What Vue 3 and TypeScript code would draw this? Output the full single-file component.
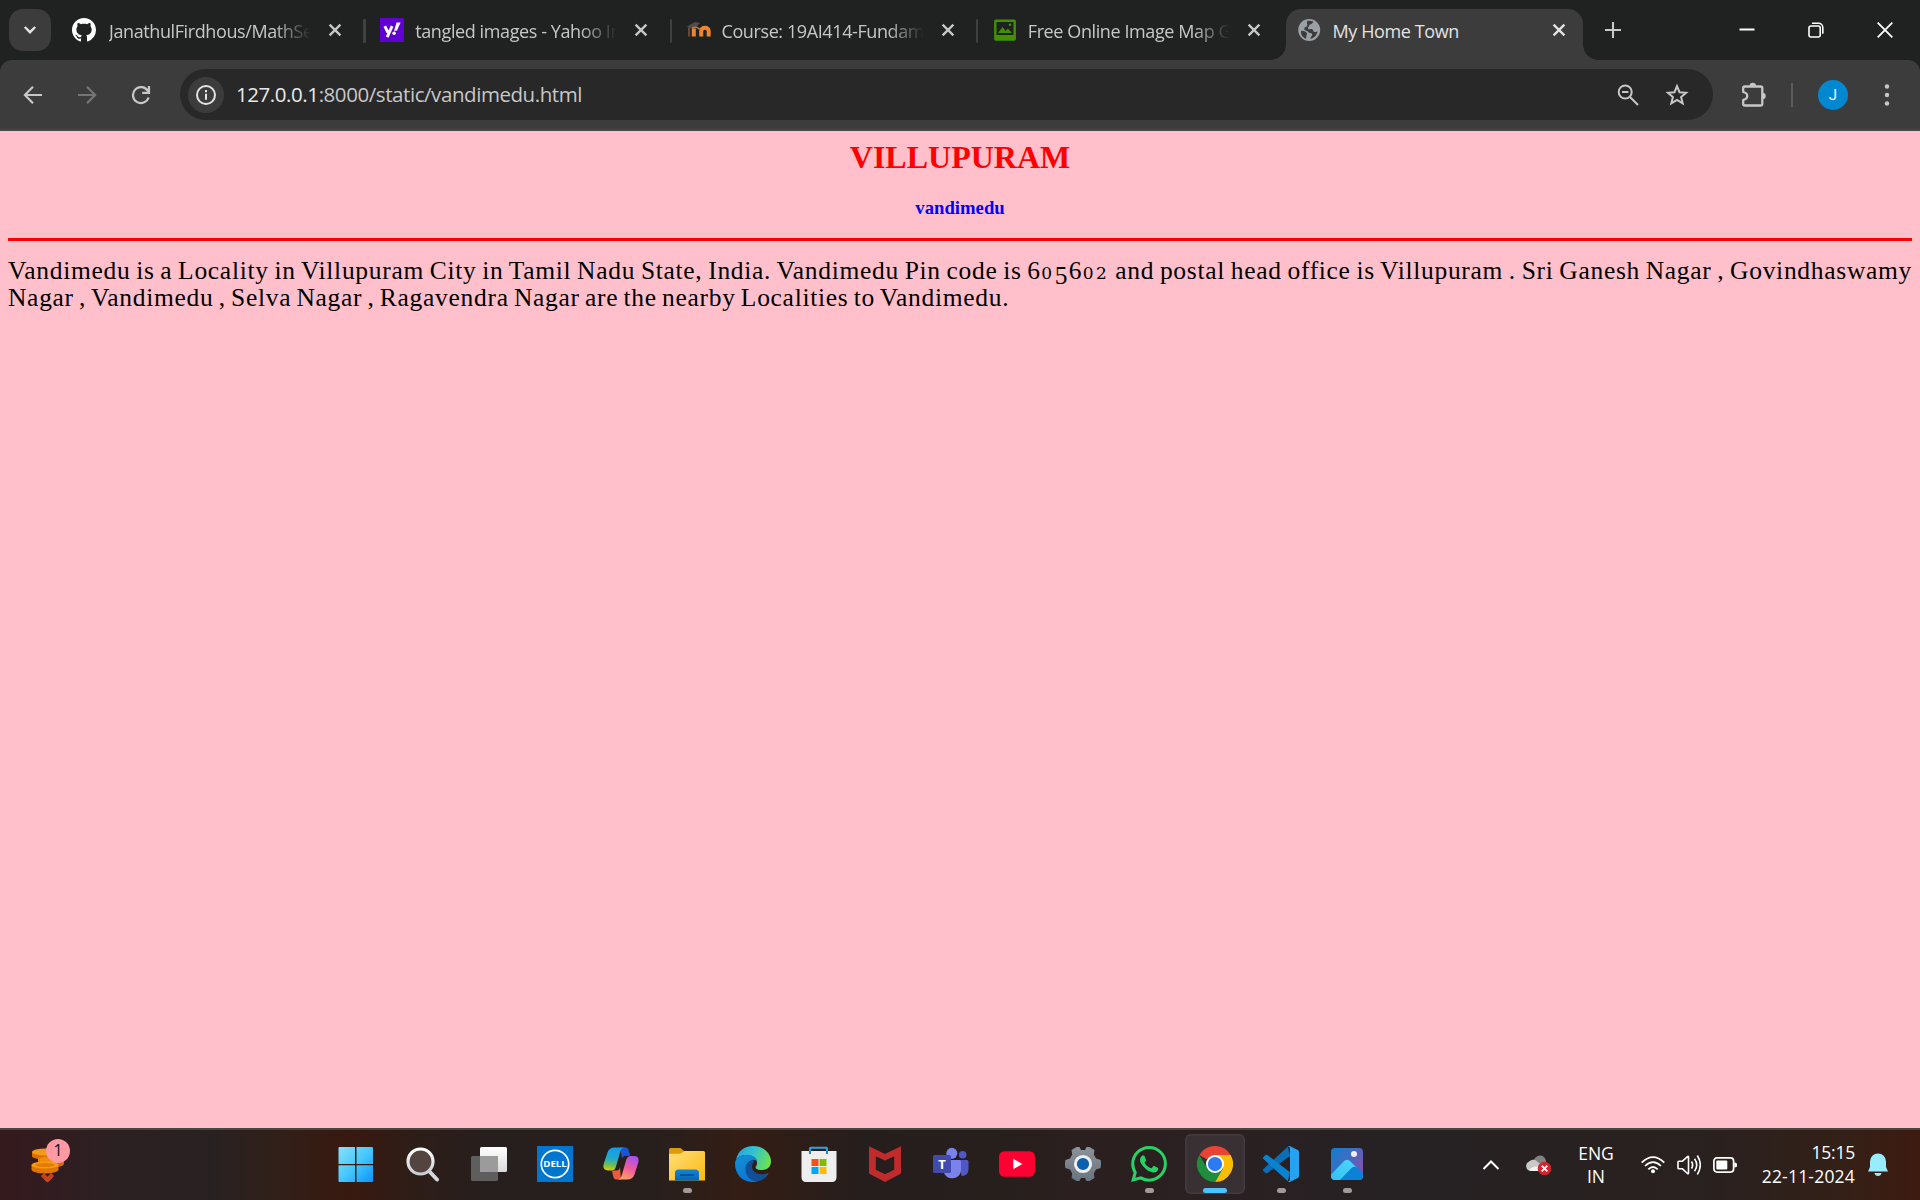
<script setup lang="ts">
interface Tab {
  id: string
  title: string
  active: boolean
}

const tabs: Tab[] = [
  { id: 'github', title: 'JanathulFirdhous/MathServer', active: false },
  { id: 'yahoo', title: 'tangled images - Yahoo Image', active: false },
  { id: 'moodle', title: 'Course: 19AI414-Fundamentals', active: false },
  { id: 'map', title: 'Free Online Image Map Generator', active: false },
  { id: 'globe', title: 'My Home Town', active: true },
]
</script>

<template>
  <div class="screen">
    <header class="tabstrip">
      <button class="tab-search">
        <svg width="14" height="10" viewBox="0 0 14 10"><path d="M1.8 2 7 7.2 12.2 2" fill="none" stroke="#e3e3e3" stroke-width="2.4" /></svg>
      </button>
      <div class="tabs">
        <div v-for="tab in tabs" :key="tab.id" class="tab" :class="[tab.id, { active: tab.active }]">
          <span class="fav">
            <svg v-if="tab.id === 'github'" width="24" height="24" viewBox="0 0 16 16"><path fill="#fff" d="M8 0C3.58 0 0 3.58 0 8c0 3.54 2.29 6.53 5.47 7.59.4.07.55-.17.55-.38 0-.19-.01-.82-.01-1.49-2.01.37-2.53-.49-2.69-.94-.09-.23-.48-.94-.82-1.13-.28-.15-.68-.52-.01-.53.63-.01 1.08.58 1.23.82.72 1.21 1.87.87 2.33.66.07-.52.28-.87.51-1.07-1.78-.2-3.64-.89-3.64-3.95 0-.87.31-1.59.82-2.15-.08-.2-.36-1.02.08-2.12 0 0 .67-.21 2.2.82.64-.18 1.32-.27 2-.27s1.36.09 2 .27c1.53-1.04 2.2-.82 2.2-.82.44 1.1.16 1.92.08 2.12.51.56.82 1.27.82 2.15 0 3.07-1.87 3.75-3.65 3.95.29.25.54.73.54 1.48 0 1.07-.01 1.93-.01 2.2 0 .21.15.46.55.38A8.01 8.01 0 0 0 16 8c0-4.42-3.58-8-8-8Z" /></svg>
            <svg v-else-if="tab.id === 'yahoo'" width="24" height="24" viewBox="0 0 24 24">
              <rect width="24" height="24" fill="#6001d2" />
              <path d="M4.8 8.2 8 14.6M12.1 8.2 7.2 19.2" fill="none" stroke="#fff" stroke-width="2.9" />
              <path d="M16.6 4.6h4l-3.7 8.2h-2.9z" fill="#fff" /><circle cx="14.1" cy="15.3" r="1.8" fill="#fff" />
            </svg>
            <svg v-else-if="tab.id === 'moodle'" width="24" height="24" viewBox="0 0 24 24">
              <path d="M0 8.5 8 4l5 1-4 4.5-7 .5z" fill="#534b49" />
              <path d="M2 9.5v9" stroke="#69483a" stroke-width="2" />
              <path d="M6.8 18.6v-8M14.2 18.6v-5.3c0-4.8 7.5-4.8 7.5 0v5.3" fill="none" stroke="#f0842c" stroke-width="4" />
              <path d="M4.8 10.5q5-3 8 1" fill="none" stroke="#c4773a" stroke-width="1.6" />
            </svg>
            <svg v-else-if="tab.id === 'map'" width="24" height="24" viewBox="0 0 24 24">
              <rect x="2.3" y="2.700" width="19.4" height="18.800" rx=".6" fill="#202221" stroke="#429102" stroke-width="2.4" />
              <path d="M2 17h20v5H2zM5 15l4.5-6 3.2 4 2.1-2.600 4 4.600z" fill="#429102" /><circle cx="17" cy="6.800" r="1.3" fill="#429102" />
            </svg>
            <svg v-else width="24" height="24" viewBox="0 0 24 24">
              <circle cx="11.2" cy="12" r="11" fill="#9aa0a6" />
              <path d="M3.2 12.8c3.3.2 5.4 1 5.8 2.8.2 1.7-1 2-.7 3.6l-.2 1.6C4.3 19.4 2.4 16 3.2 12.8zM9.3 3.1c3.7-.8 5.6.4 6.4 1.2-1.8.3-1.6 1.8-3 2-2.3.3-1 2.5-2.5 3-.9.5-.1 2 1.2 1.9 2.4-.4 3.5.1 4 1.7.6 1.4 2 1.4 3 .9l1.1-.4c-.8 4-3.5 6.8-7.3 7.3.3-2.2 2.1-2.3 2-4.2-.1-1.2-1.5-1.4-2.4-1.5-1.7-.2-1.6-1.9-3.2-2.2-2-.3-2.9-1.3-2-3 .9-1.5 2.6-.8 2.7-2.6.1-1.7-.7-2.6 0-4.1z" fill="#3c3c3c" />
            </svg>
          </span>
          <span class="tab-title">{{ tab.title }}</span>
          <svg class="tab-close" width="14" height="14" viewBox="0 0 14 14"><path d="M1.6 1.6 12.4 12.4M12.4 1.6 1.6 12.4" stroke="currentColor" stroke-width="2.3" fill="none" /></svg>
        </div>
      </div>
      <svg class="new-tab" width="16" height="16" viewBox="0 0 16 16"><path d="M8 0v16M0 8h16" stroke="#c9c9c9" stroke-width="2.1" /></svg>
      <div class="win-controls">
        <svg width="16" height="16" viewBox="0 0 16 16"><path d="M.5 7.500h15" stroke="#fff" stroke-width="2" /></svg>
        <svg width="16" height="16" viewBox="0 0 16 16" fill="none" stroke="#fff" stroke-width="1.6"><rect x="1" y="4" width="11.2" height="11" rx="2" /><path d="M4 1.2h6.5a4.3 4.3 0 0 1 4.3 4.3v6.2" /></svg>
        <svg width="16" height="16" viewBox="0 0 16 16"><path d="M.7.7 15.3 15.3M15.3.7.7 15.3" stroke="#fff" stroke-width="1.8" /></svg>
      </div>
    </header>

    <nav class="toolbar">
      <div class="nav-icons">
        <svg width="20" height="20" viewBox="0 0 20 20" fill="none" stroke="#c7c7c7" stroke-width="2.2"><path d="M19 10H2.5M10 1.8 1.9 10l8.1 8.2" /></svg>
        <svg width="20" height="20" viewBox="0 0 20 20" fill="none" stroke="#757575" stroke-width="2.2"><path d="M1 10h16.5M10 1.8l8.1 8.2-8.1 8.2" /></svg>
        <svg width="20" height="20" viewBox="0 0 20 20" fill="none" stroke="#c7c7c7" stroke-width="2.2"><path d="M17.6 12.5A8 8 0 1 1 17 6.2M18 1v6.8h-6.8" /></svg>
      </div>
      <div class="omnibox">
        <span class="site-info">
          <svg width="22" height="22" viewBox="0 0 22 22"><circle cx="11" cy="11" r="9" fill="none" stroke="#e3e3e3" stroke-width="2" /><path d="M11 9.8v6M11 6v2.2" stroke="#e3e3e3" stroke-width="2" /></svg>
        </span>
        <span class="url"><b>127.0.0.1</b>:8000/static/vandimedu.html</span>
        <svg class="zoom-icon" width="24" height="24" viewBox="0 0 24 24" fill="none" stroke="#c7c7c7" stroke-width="2"><circle cx="9.2" cy="9" r="6.5" /><path d="M14 14l8 8M6 9h6.4" /></svg>
        <svg width="24" height="24" viewBox="0 0 24 24" fill="none" stroke="#c7c7c7" stroke-width="2"><path d="M12 3.2l2.5 6 6.6.5-5 4.3 1.6 6.4-5.7-3.4-5.7 3.4L7.9 14l-5-4.3 6.6-.5z" /></svg>
      </div>
      <svg class="ext" width="26" height="26" viewBox="0 0 26 26"><path d="M3.2 6.2q0-1.7 1.700-1.700h15.700q1.700 0 1.700 1.700v15.600q0 1.700-1.700 1.700H4.900q-1.700 0-1.700-1.700v-3.900c5.400-1.200 5.400-6.700 0-7.900z" fill="none" stroke="#c7c7c7" stroke-width="2.3" stroke-linejoin="round" /><path d="M9.600 4a3.200 3.200 0 0 1 6.400 0zM22.500 10.800a3.200 3.200 0 0 1 0 6.400z" fill="#c7c7c7" /></svg>
      <i class="bar-divider"></i>
      <span class="avatar">J</span>
      <svg class="menu" width="6" height="26" viewBox="0 0 6 26" fill="#c7c7c7"><circle cx="3" cy="4.5" r="2.2" /><circle cx="3" cy="13" r="2.2" /><circle cx="3" cy="21.5" r="2.2" /></svg>
    </nav>

    <main class="page">
      <h1>VILLUPURAM</h1>
      <h3>vandimedu</h3>
      <hr />
      <p>Vandimedu is a Locality in Villupuram City in Tamil Nadu State, India. Vandimedu Pin code is <span class="num">6<i>0</i><u>5</u>6<i>02</i></span> and postal head office is Villupuram . Sri Ganesh Nagar , Govindhaswamy Nagar , Vandimedu , Selva Nagar , Ragavendra Nagar are the nearby Localities to Vandimedu.</p>
    </main>

    <footer class="taskbar">
      <div class="widget">
        <svg width="34" height="38" viewBox="0 0 34 38">
          <path d="M7 12v5c0 5 24 5 26 0v-5z" fill="#d46b00" />
          <path d="M1 5v4.5c2 4 24 4 27 0V5z" fill="#d96f00" /><ellipse cx="14.5" cy="5" rx="13.5" ry="3.6" fill="#f59a16" />
          <ellipse cx="20" cy="13" rx="13" ry="3.4" fill="#ef8c0c" />
          <path d="M.5 18v5c2 4.5 25 4.5 27 0v-5z" fill="#de7500" /><ellipse cx="14" cy="18" rx="13.5" ry="3.6" fill="#f79a12" /><ellipse cx="14" cy="18" rx="9.5" ry="2" fill="#e27c04" />
          <path d="M11.500 27.500l5 5.500 5-5.500" fill="none" stroke="#c8431c" stroke-width="4.2" stroke-linejoin="round" />
        </svg>
        <span class="badge">1</span>
      </div>

      <div class="apps">
        <span class="app start"><svg width="36" height="36" viewBox="0 0 36 36"><defs><linearGradient id="win" gradientUnits="userSpaceOnUse" x1="0" y1="0" x2="36" y2="36"><stop offset="0" stop-color="#8be1fb" /><stop offset=".5" stop-color="#48c8fb" /><stop offset="1" stop-color="#0893fb" /></linearGradient></defs><path fill="url(#win)" d="M1.5 1H17v17H.5V2q0-1 1-1zM18.500 1H34q1 0 1 1v16H18.500zM.5 19.300H17V36H1.500q-1 0-1-1zM18.500 19.300H35V35q0 1-1 1H18.500z" /></svg></span>
        <span class="app"><svg width="36" height="36" viewBox="0 0 36 36"><defs><linearGradient id="mag" x1="0" y1="0" x2="0" y2="1"><stop offset="0" stop-color="#fff" /><stop offset="1" stop-color="#c9ccd2" /></linearGradient></defs><path d="M24 25l8 8.500" stroke="#d4d7dc" stroke-width="4" stroke-linecap="round" /><circle cx="15.500" cy="15.500" r="12.500" fill="#54443f" stroke="url(#mag)" stroke-width="3.200" /></svg></span>
        <span class="app"><svg width="36" height="36" viewBox="0 0 36 36"><defs><linearGradient id="tv" x1="0" y1="0" x2="0" y2="1"><stop offset="0" stop-color="#fff" /><stop offset="1" stop-color="#d9d9d9" /></linearGradient></defs><rect x="0" y="10" width="27" height="25" rx="1.5" fill="#5e5e5e" /><rect x="9" y="1" width="27" height="25" rx="1.5" fill="url(#tv)" /><path d="M9 10h18v16H10.500Q9 26 9 24.500z" fill="#9b9b9b" /></svg></span>
        <span class="app"><svg width="36" height="36" viewBox="0 0 36 36"><rect width="36" height="36" fill="#0076ce" /><circle cx="18" cy="18" r="13.7" fill="none" stroke="#fff" stroke-width="1.7" /><text x="18" y="21.4" text-anchor="middle" textLength="23.5" lengthAdjust="spacingAndGlyphs" class="dell">DELL</text></svg></span>
        <span class="app"><svg width="36" height="36" viewBox="0 0 36 36"><defs>
          <linearGradient id="cp1" x1=".2" y1="0" x2=".1" y2="1"><stop offset="0" stop-color="#159bea" /><stop offset=".45" stop-color="#20a9d0" /><stop offset=".75" stop-color="#6cbf50" /><stop offset="1" stop-color="#ebc907" /></linearGradient>
          <linearGradient id="cp2" x1=".7" y1="0" x2=".3" y2="1"><stop offset="0" stop-color="#a750ef" /><stop offset=".5" stop-color="#ee5a9c" /><stop offset="1" stop-color="#ffa560" /></linearGradient></defs>
          <path d="M17 1.500h5c3 0 3.500 2 4.300 5l1 3.200h-4.500c-2 0-3 1-3.600 3z" fill="#1a54d8" />
          <path d="M18 33.500h-4c-3 0-3.500-2-4.300-5L9 24.500h4.500c2 0 3-1 3.600-3z" fill="#ed5a3c" />
          <path d="M12 1.500h10c-3 0-4.200 2-5 5L13 20.500c-1 3-2 4-5 4H5c-4 0-5.300-2.500-4.300-6.500L4.500 6.500C5.700 3 8 1.500 12 1.500z" fill="url(#cp1)" />
          <path d="M24 33.500H14c3 0 4.200-2 5-5l4-14c1-3 2-4.500 5-4.500h3c4 0 5.300 2.500 4.300 6.500l-3.800 12c-1.200 3.500-3.500 5-7.500 5z" fill="url(#cp2)" /></svg></span>
        <span class="app running"><svg width="36" height="36" viewBox="0 0 36 36"><defs><linearGradient id="fo" x1="0" y1="0" x2="1" y2="1"><stop offset="0" stop-color="#ffdf78" /><stop offset="1" stop-color="#fbb912" /></linearGradient><linearGradient id="fb" x1="0" y1="0" x2="0" y2="1"><stop offset="0" stop-color="#1185d5" /><stop offset="1" stop-color="#0765b6" /></linearGradient></defs><path d="M0 3.500Q0 2 1.500 2h9.300q1.200 0 2 1l2.200 2-3 6H0z" fill="#dc9a06" /><path d="M0 7.700h10.500q1.300 0 2.300-.8L15 5h19.500Q36 5 36 6.500v28H0z" fill="url(#fo)" /><path d="M6 34.500V27q0-3.500 3.500-3.500h17Q30 23.500 30 27v7.500z" fill="url(#fb)" /><path d="M11 29h14" stroke="#064b8b" stroke-width="1.6" /></svg></span>
        <span class="app"><svg width="36" height="36" viewBox="0 0 36 36"><defs><linearGradient id="ed" x1="0" y1=".3" x2="1" y2=".6"><stop offset="0" stop-color="#27a4e2" /><stop offset=".45" stop-color="#34c2cf" /><stop offset="1" stop-color="#70e34a" /></linearGradient><linearGradient id="eb" x1="0" y1="0" x2=".4" y2="1"><stop offset="0" stop-color="#1391d3" /><stop offset="1" stop-color="#0a78d4" /></linearGradient></defs>
          <path d="M1 14C2.500 5 9.500 0 18 0c10 0 18 7 18 15.500 0 5-4 8.500-9 8.500-4 0-6.800-1.300-6.300-3 .8-1.500 1.600-2.400 1.300-5C21.500 11 16.500 9 12 9 6.500 9 2.500 11 1 14z" fill="url(#ed)" />
          <path d="M0 18C0 12.500 5 8.700 12 8.700c5.500 0 10 3 10 7.300-1-2-3-2.500-4.500-2-4 1-7 5-6.500 10 .5 6 5.500 11 11.500 11.400C9.500 38.500 0 29.500 0 18z" fill="url(#eb)" />
          <path d="M17.500 14c-4 1-7.500 5-7 10 .5 7 6 11.500 12 11.400 4.500-.9 8.500-3.500 11-7.500.3-.8-.2-1.200-1-.9-6.500 3-15 .5-15.500-6-.1-2.500 1.300-4 1.700-4.700.4-.8.2-1.800-1.200-2.300z" fill="#104f9a" /></svg></span>
        <span class="app"><svg width="36" height="36" viewBox="0 0 36 36"><path d="M9 8V2.500Q9 1.800 9.700 1.800h15.600q.7 0 .7.700V8" fill="none" stroke="#28a8ea" stroke-width="2" /><path d="M.5 5H35.500V31Q35.500 36 31 36H5Q.5 36 .5 31z" fill="#eeeeef" /><path d="M9 5v3M26 5v3" stroke="#1c87c5" stroke-width="2" /><path d="M10.500 13h7v7h-7z" fill="#f1511b" /><path d="M18.500 13h7v7h-7z" fill="#80bc06" /><path d="M10.500 21h7v7h-7z" fill="#05a6f0" /><path d="M18.500 21h7v7h-7z" fill="#ffba08" /></svg></span>
        <span class="app"><svg width="36" height="36" viewBox="0 0 36 36"><path d="M2 .3 18 8 34 .3V27.500L18 36 2 27.500zM8.800 10.300v13.400L18 28.300l9.200-4.600V10.300L18 14.500z" fill="#c12b2b" fill-rule="evenodd" /></svg></span>
        <span class="app"><svg width="36" height="36" viewBox="0 0 36 36"><circle cx="29.700" cy="8.700" r="3.800" fill="#5058c8" /><path d="M25 14h9q1.500 0 1.500 1.500V23q0 7-7 7z" fill="#5058c8" /><circle cx="18.800" cy="7.300" r="5.500" fill="#7b83eb" /><path d="M11 14h15.500q1.500 0 1.500 1.500V25a9 9 0 0 1-17 2z" fill="#7b83eb" /><rect y="9" width="18" height="18" rx="1.5" fill="#434aae" /><text x="9" y="22.5" text-anchor="middle" class="teams">T</text></svg></span>
        <span class="app"><svg width="36" height="36" viewBox="0 0 36 36"><rect y="5.2" width="36" height="25.600" rx="5.500" fill="#ff0033" /><path d="M14.300 12.800v10.400l9-5.200z" fill="#fff" /></svg></span>
        <span class="app"><svg width="36" height="36" viewBox="0 0 36 36"><defs><linearGradient id="ge" x1="0" y1="0" x2="0" y2="1"><stop offset="0" stop-color="#8c9298" /><stop offset="1" stop-color="#697580" /></linearGradient></defs><path d="M11.500 1h3l1.500 3h4l1.500-3h3l5 3-.7 4.500 2.300 4 4.500 1.500q.8 4 0 8L31 23.500l-2.200 4 .7 4.500-5 3h-3L20 32h-4l-1.500 3h-3l-5-3 .7-4.500-2.200-4L.4 22q-.8-4 0-8L5 12.500l2.200-4L6.500 4z" fill="url(#ge)" /><circle cx="18" cy="18" r="7.600" fill="#0d60af" stroke="#eee" stroke-width="3" /></svg></span>
        <span class="app running"><svg width="36" height="36" viewBox="0 0 24 24"><path fill="#25d366" d="M17.472 14.382c-.297-.149-1.758-.867-2.030-.967-.273-.099-.471-.148-.67.15-.197.297-.767.966-.94 1.164-.173.199-.347.223-.644.075-.297-.15-1.255-.463-2.390-1.475-.883-.788-1.480-1.761-1.653-2.059-.173-.297-.018-.458.13-.606.134-.133.298-.347.446-.52.149-.174.198-.298.298-.497.099-.198.05-.371-.025-.52-.075-.149-.669-1.612-.916-2.207-.242-.579-.487-.5-.669-.51-.173-.008-.371-.01-.57-.01-.198 0-.52.074-.792.372-.272.297-1.040 1.016-1.040 2.479 0 1.462 1.065 2.875 1.213 3.074.149.198 2.096 3.200 5.077 4.487.709.306 1.262.489 1.694.625.712.227 1.360.195 1.871.118.571-.085 1.758-.719 2.006-1.413.248-.694.248-1.289.173-1.413-.074-.124-.272-.198-.57-.347m-5.421 7.403h-.004a9.870 9.870 0 0 1-5.031-1.378l-.361-.214-3.741.982.998-3.648-.235-.374a9.860 9.860 0 0 1-1.510-5.260c.001-5.450 4.436-9.884 9.888-9.884 2.640 0 5.122 1.030 6.988 2.898a9.825 9.825 0 0 1 2.893 6.994c-.003 5.450-4.437 9.884-9.885 9.884m8.413-18.297A11.815 11.815 0 0 0 12.050 0C5.495 0 .16 5.335.157 11.892c0 2.096.547 4.142 1.588 5.945L.057 24l6.305-1.654a11.882 11.882 0 0 0 5.683 1.448h.005c6.554 0 11.890-5.335 11.893-11.893a11.821 11.821 0 0 0-3.480-8.413z" /></svg></span>
        <span class="app current"><svg width="36" height="36" viewBox="0 0 48 48"><path d="M24 24 3.200 12A24 24 0 0 1 44.800 12z" fill="#ea4335" /><path d="M24 12H44.800A24 24 0 0 1 24 48L34.400 30z" fill="#fbbc04" /><path d="M3.200 12A24 24 0 0 0 24 48L34.400 30H13.600z" fill="#1e8e3e" /><circle cx="24" cy="24" r="12" fill="#fff" /><circle cx="24" cy="24" r="9.500" fill="#2c7bf0" /></svg></span>
        <span class="app running"><svg width="36" height="36" viewBox="0 0 24 24"><path d="M1.650 17.940.327 16.740a1 1 0 0 1 0-1.480L16.500.5l1.504 6.052L2.926 17.997a1 1 0 0 1-1.276-.057z" fill="#0b6fb8" /><path d="M1.650 6.060.327 7.260a1 1 0 0 0 0 1.480L16.500 23.500l1.504-6.052L2.926 6.002a1 1 0 0 0-1.276.058z" fill="#0a82d0" /><path d="M16.500.5Q17.300-.2 18.210.21l4.940 2.377A1.500 1.500 0 0 1 24 3.940v16.120a1.500 1.500 0 0 1-.85 1.353l-4.940 2.377q-.9.400-1.710-.29 1.500.3 1.504-1.500V2q0-1.800-1.504-1.500z" fill="#25a3f2" /></svg></span>
        <span class="app running"><svg width="36" height="36" viewBox="0 0 36 36"><defs><linearGradient id="ph" x1="0" y1="0" x2="1" y2=".7"><stop offset="0" stop-color="#107ed1" /><stop offset=".55" stop-color="#436bc0" /><stop offset="1" stop-color="#8a50ad" /></linearGradient><linearGradient id="pm" x1="0" y1="1" x2="1" y2="0"><stop offset="0" stop-color="#2ec0f3" /><stop offset="1" stop-color="#4fd7fb" /></linearGradient><clipPath id="pc"><rect x="2" y="2" width="32" height="32" rx="4" /></clipPath></defs><g clip-path="url(#pc)"><path d="M2 2h32v32H2z" fill="url(#ph)" /><path d="M8 36 22 21q3-3 6 0l8 8v7z" fill="#0b82d8" /><path d="M0 31 14.500 15.500q3.500-3.500 7 0L28 22q-3-2.500-6 .5L9 36H0z" fill="url(#pm)" /></g><circle cx="25" cy="8" r="3" fill="#f4f0fa" /></svg></span>
      </div>

      <div class="tray">
        <svg class="chev" width="18" height="12" viewBox="0 0 18 12"><path d="M1.500 10 9 2.500 16.500 10" fill="none" stroke="#fff" stroke-width="2" /></svg>
        <svg class="cloud" width="26" height="22" viewBox="0 0 26 22"><path d="M7 7C10-.5 19-.5 20 7v8H9z" fill="#828282" /><path d="M5.500 17A5 5 0 0 1 3 7.500C7 4.500 10 6 12 8.500l7 3V17z" fill="#c8c8c8" /><path d="M3 16q4-5 11-3v4H6z" fill="#f3f3f3" /><circle cx="18.500" cy="14.500" r="6.800" fill="#d3222a" /><path d="M15.700 11.700l5.600 5.600M21.300 11.700l-5.600 5.600" stroke="#fff" stroke-width="1.900" /></svg>
        <div class="lang"><span>ENG</span><span>IN</span></div>
        <svg class="wifi" width="24" height="20" viewBox="0 0 24 20" fill="none" stroke="#fff" stroke-width="1.700"><path d="M.7 7.700Q12-3.600 23.300 7.700M4 11Q12 3.200 20 11M7.300 14.300Q12 9.700 16.700 14.300" /><circle cx="12" cy="16.300" r="2" fill="#fff" stroke="none" /></svg>
        <svg class="speaker" width="24" height="22" viewBox="0 0 24 22" fill="none" stroke="#fff" stroke-width="1.600" stroke-linejoin="round"><path d="M1 8q0-.7.700-.7h3.500L10.500 2.600q1-.6 1 .5v16q0 1-1 .4l-5.300-4.800H1.700Q1 14.700 1 14zM14.500 7.500q2.300 3.500 0 7M17.500 4.700q4.500 6.300 0 12.600M20.300 1.500q6 9.500 0 19" /></svg>
        <svg class="battery" width="24" height="16" viewBox="0 0 24 16"><rect x=".9" y=".9" width="19.700" height="14.200" rx="3" fill="none" stroke="#fff" stroke-width="1.700" /><rect x="3.300" y="3.500" width="11" height="9" rx="1" fill="#fff" /><path d="M21.300 5.500q3 0 3 2.500t-3 2.500z" fill="#fff" /></svg>
        <div class="clock"><span>15:15</span><span class="date">22-11-2024</span></div>
        <svg class="bell" width="20" height="24" viewBox="0 0 20 24" fill="#99ebff"><path d="M2 8.500a8 8 0 0 1 16 0v5.500l2 4.500H0L2 14zM6.500 20h7q-.5 3-3.500 3t-3.500-3z" /></svg>
      </div>
    </footer>
  </div>
</template>

<style>
body {
  margin: 0;
  overflow: hidden;
}
</style>

<style scoped>
.screen {
  width: 1920px;
  height: 1200px;
  display: flex;
  flex-direction: column;
  overflow: hidden;
  background: #202221;
  font-family: 'Open Sans', 'Noto Sans', sans-serif;
}
svg {
  display: block;
  flex: none;
}
.tabstrip {
  height: 60px;
  flex: none;
  display: flex;
  align-items: center;
  background: #202221;
}
.tab-search {
  width: 42px;
  height: 42px;
  margin: 0 8.5px 0 9px;
  padding: 0;
  border: 0;
  border-radius: 14px;
  background: #3c3c3c;
  display: grid;
  place-items: center;
  flex: none;
}
.tabs {
  display: flex;
  align-self: stretch;
}
.tab {
  width: 306.25px;
  height: 60px;
  box-sizing: border-box;
  padding-left: 14.5px;
  display: flex;
  align-items: center;
  position: relative;
  color: #c7c7c7;
  flex: none;
}
.tab.github {
  padding-left: 12.5px;
}
.tab.github .fav {
  margin-right: 13px;
}
.tab.github .tab-close {
  margin-left: 17px;
}
.tab::after {
  content: '';
  position: absolute;
  right: 0;
  top: 19px;
  width: 2.5px;
  height: 24px;
  border-radius: 1px;
  background: #3f4040;
}
.tab.map::after {
  display: none;
}
.tab.active {
  width: 297px;
  height: 51px;
  margin: 9px 0 0 1px;
  padding-left: 12px;
  padding-bottom: 9px;
  border-radius: 15px 15px 0 0;
  background: #3c3c3c;
  color: #e3e3e3;
}
.tab.active::before,
.tab.active::after {
  content: '';
  position: absolute;
  top: auto;
  bottom: 0;
  width: 15px;
  height: 15px;
  border-radius: 0;
}
.tab.active::before {
  left: -15px;
  background: radial-gradient(circle at 0 0, transparent 14.5px, #3c3c3c 15px);
}
.tab.active::after {
  right: -15px;
  background: radial-gradient(circle at 100% 0, transparent 14.5px, #3c3c3c 15px);
}
.fav {
  width: 24px;
  height: 24px;
  margin-right: 11px;
  flex: none;
}
.tab-title {
  width: 202px;
  overflow: hidden;
  white-space: nowrap;
  font-size: 18px;
  letter-spacing: -0.4px;
  line-height: 26px;
  padding-top: 1px;
  flex: none;
}
.tab:not(.active) .tab-title {
  mask-image: linear-gradient(90deg, #000 165px, transparent 202px);
}
.tab-close {
  margin-left: 17px;
}
.new-tab {
  margin-left: 22px;
}
.win-controls {
  margin-left: auto;
  margin-right: 27px;
  display: flex;
  gap: 53px;
}
.toolbar {
  height: 71px;
  box-sizing: border-box;
  border-bottom: 2px solid #474747;
  flex: none;
  display: flex;
  align-items: center;
  background: #3c3c3c;
  border-radius: 12px 12px 0 0;
}
.nav-icons {
  display: flex;
  gap: 34px;
  padding-left: 23px;
  width: 157px;
}
.omnibox {
  width: 1533px;
  height: 51px;
  box-sizing: border-box;
  padding: 0 24px 0 8px;
  border-radius: 26px;
  background: #282828;
  display: flex;
  align-items: center;
}
.site-info {
  width: 36px;
  height: 36px;
  border-radius: 50%;
  background: #3c3c3c;
  display: grid;
  place-items: center;
  margin-right: 12px;
}
.url {
  padding-bottom: 2px;
  font-size: 20.5px;
  letter-spacing: -0.43px;
  color: #c7c7c7;
}
.url b {
  font-weight: 400;
  color: #e8e8e8;
}
.zoom-icon {
  margin-left: auto;
  margin-right: 25px;
}
.ext {
  margin-left: 27px;
}
.bar-divider {
  width: 2px;
  height: 24px;
  margin: 0 25px;
  background: #5c5c5c;
}
.avatar {
  width: 30px;
  height: 30px;
  border-radius: 50%;
  background: #0288d1;
  color: #fff;
  font-family: Roboto, sans-serif;
  font-size: 15px;
  line-height: 30px;
  text-align: center;
}
.menu {
  margin-left: 36px;
}
.page {
  flex: 1;
  min-height: 0;
  padding: 8px;
  background: #ffc0cb;
  color: #000;
  font-family: 'Liberation Serif', serif;
}
.page h1 {
  margin: 0 0 21px;
  font-size: 32px;
  line-height: 37px;
  text-align: center;
  color: #f00;
}
.page h3 {
  margin: 0 0 19px;
  font-size: 18.72px;
  line-height: 22px;
  text-align: center;
  color: #00f;
}
.page hr {
  height: 3px;
  margin: 0;
  border: 0;
  background: #f00;
}
.page p {
  margin: 16px 0 0;
  font-size: 25.5px;
  line-height: 27px;
  letter-spacing: 0.7px;
  word-spacing: -1.8px;
  text-align: justify;
}
.num {
  letter-spacing: 1.2px;
}
.num i {
  font: normal 17px 'DejaVu Serif', serif;
  letter-spacing: 2.6px;
  line-height: 0;
}
.num u {
  text-decoration: none;
  vertical-align: -5px;
  line-height: 0;
}
.taskbar {
  height: 72px;
  box-sizing: border-box;
  border-top: 2px solid #494342;
  flex: none;
  display: flex;
  background: linear-gradient(90deg, #35191d 0, #2c2023 110px, #282122 210px, #30201a 270px, #38190f 350px, #2e1d17 410px, #261f1e 490px, #281f1c 660px, #341d14 740px, #261e1c 860px, #261f1c 980px, #2b201f 1090px, #2a2023 1240px, #262122 1380px, #272122 1500px, #2a211f 1720px, #332017 1840px, #3e1b11 1920px);
}
.widget {
  position: relative;
  width: 327px;
  padding: 17px 0 0 31px;
  box-sizing: border-box;
  flex: none;
}
.badge {
  position: absolute;
  left: 46px;
  top: 8.5px;
  width: 24px;
  height: 24px;
  border-radius: 50%;
  background: #ff99a4;
  color: #111;
  font-size: 16px;
  line-height: 23px;
  text-align: center;
}
.apps {
  display: flex;
  flex: none;
}
.app {
  position: relative;
  width: 60px;
  height: 60px;
  margin: 4px 6px 0 0;
  border-radius: 6px;
  display: grid;
  place-items: center;
}
.app.start {
  box-sizing: border-box;
  padding-right: 2px;
}
.app.current {
  background: #393033;
  box-shadow: inset 0 0 0 1.5px #423a3c;
}
.app.running::after,
.app.current::after {
  content: '';
  position: absolute;
  left: 25.5px;
  bottom: 1px;
  width: 9px;
  height: 5px;
  border-radius: 2.5px;
  background: #a09a99;
}
.app.current::after {
  left: 18px;
  width: 24px;
  background: #4cc2ff;
}
.dell {
  font: 700 9.5px 'Open Sans', sans-serif;
  fill: #fff;
}
.teams {
  font: 700 13px 'Open Sans', sans-serif;
  fill: #fff;
}
.tray {
  flex: 1;
  display: flex;
  align-items: center;
  color: #fff;
  font-size: 17.5px;
  line-height: 24px;
}
.chev {
  margin-left: 99px;
}
.cloud {
  margin-left: 26px;
}
.lang {
  width: 50px;
  margin-left: 19px;
  display: flex;
  flex-direction: column;
  align-items: center;
  line-height: 23px;
}
.wifi {
  margin-left: 20px;
}
.speaker {
  margin-left: 12px;
}
.battery {
  margin-left: 12px;
}
.clock {
  width: 118px;
  padding-bottom: 3px;
  display: flex;
  flex-direction: column;
  align-items: flex-end;
  letter-spacing: -0.2px;
}
.date {
  letter-spacing: 0.2px;
}
.bell {
  margin-left: 13px;
}
</style>
